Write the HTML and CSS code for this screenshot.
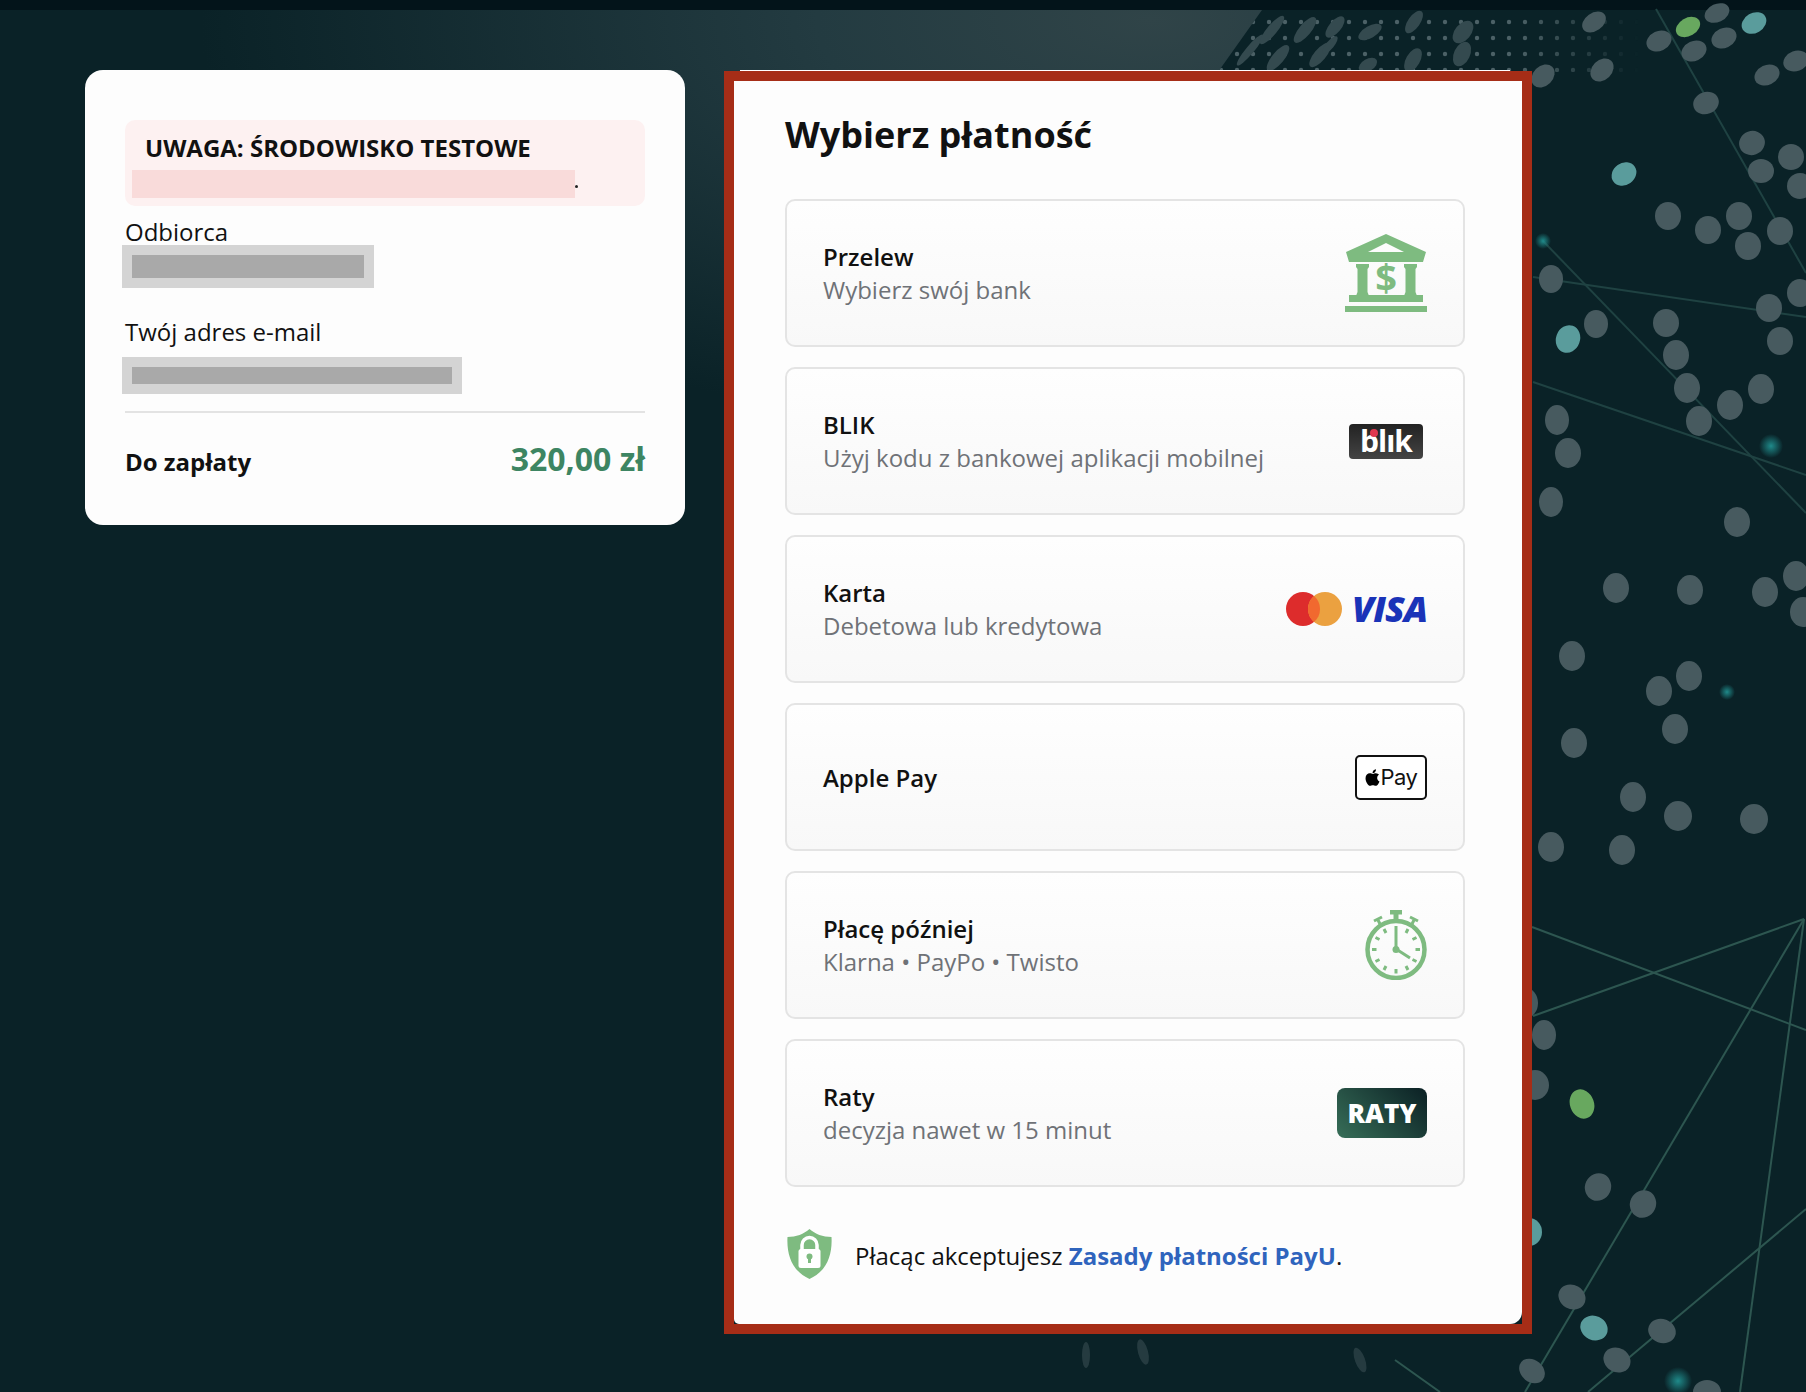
FILE: index.html

```html
<!DOCTYPE html>
<html lang="pl">
<head>
    <meta charset="UTF-8">
    <title>Wybierz płatność</title>
    <link rel="stylesheet" href="styles.css">
</head>
<body>
    <!-- Background picture -->
    <svg class="backdrop" width="1806" height="1392" viewBox="0 0 1806 1392">
        <defs>
            <radialGradient id="haze" gradientUnits="userSpaceOnUse" cx="0" cy="0" r="1" gradientTransform="translate(1150 20) scale(950 420)">
                <stop offset="0" stop-color="#304448"/>
                <stop offset="0.35" stop-color="#233b41"/>
                <stop offset="1" stop-color="#0a2227"/>
            </radialGradient>
            <pattern id="dots" width="16" height="16" patternUnits="userSpaceOnUse">
                <circle cx="5" cy="6" r="2.200" fill="#4c6166"/>
            </pattern>
            <linearGradient id="fade" gradientUnits="userSpaceOnUse" x1="1230" x2="1640" y1="0" y2="0">
                <stop offset="0" stop-color="#fff"/>
                <stop offset="0.7" stop-color="#fff"/>
                <stop offset="1" stop-color="#000"/>
            </linearGradient>
            <mask id="fade-mask"><rect x="1200" y="10" width="440" height="62" fill="url(#fade)"/></mask>
            <radialGradient id="glow">
                <stop offset="0" stop-color="#1f8a8a"/>
                <stop offset="1" stop-color="#1f8a8a" stop-opacity="0"/>
            </radialGradient>
        </defs>
        <rect width="1806" height="1392" fill="#0a2227"/>
        <rect width="1806" height="520" fill="url(#haze)"/>
        <polygon points="1262,10 1806,10 1806,520 1350,520 1350,90 1218,72" fill="#0a2227"/>
        <polygon points="1218,72 1262,10 1806,10 1806,72" fill="url(#dots)" mask="url(#fade-mask)"/>
        <g class="blobs">
            <ellipse cx="1250" cy="50" rx="4" ry="20" transform="rotate(40 1250 50)"/>
            <ellipse cx="1272" cy="30" rx="5" ry="18" transform="rotate(40 1272 30)"/>
            <ellipse cx="1278" cy="58" rx="6" ry="16" transform="rotate(40 1278 58)"/>
            <ellipse cx="1305" cy="30" rx="6" ry="16" transform="rotate(40 1305 30)"/>
            <ellipse cx="1320" cy="55" rx="6" ry="15" transform="rotate(40 1320 55)"/>
            <ellipse cx="1335" cy="27" rx="6" ry="13" transform="rotate(40 1335 27)"/>
            <ellipse cx="1330" cy="45" rx="4" ry="11" transform="rotate(40 1330 45)"/>
            <ellipse cx="1370" cy="32" rx="6" ry="13" transform="rotate(60 1370 32)"/>
            <ellipse cx="1368" cy="65" rx="6" ry="10" transform="rotate(60 1368 65)"/>
            <ellipse cx="1414" cy="22" rx="6" ry="13" transform="rotate(35 1414 22)"/>
            <ellipse cx="1413" cy="60" rx="7" ry="13" transform="rotate(30 1413 60)"/>
            <ellipse cx="1463" cy="32" rx="8" ry="13" transform="rotate(40 1463 32)"/>
            <ellipse cx="1462" cy="54" rx="8" ry="13" transform="rotate(25 1462 54)"/>
        </g>
        <rect width="1806" height="10" fill="#03141a"/>
        <g class="links links-dim">
            <line x1="1656" y1="9" x2="1806" y2="273"/>
            <line x1="1543" y1="241" x2="1806" y2="513"/>
            <line x1="1533" y1="277" x2="1806" y2="317"/>
            <line x1="1533" y1="382" x2="1806" y2="475"/>
        </g>
        <g class="links">
            <line x1="1533" y1="1016" x2="1804" y2="919"/>
            <line x1="1532" y1="927" x2="1806" y2="1030"/>
            <line x1="1525" y1="1392" x2="1804" y2="919"/>
            <line x1="1740" y1="1392" x2="1804" y2="919"/>
            <line x1="1806" y1="1209" x2="1588" y2="1392"/>
            <line x1="1395" y1="1360" x2="1440" y2="1392"/>
        </g>
        <circle cx="1543" cy="241" r="8" fill="url(#glow)"/>
        <circle cx="1771" cy="446" r="12" fill="url(#glow)"/>
        <circle cx="1727" cy="692" r="8" fill="url(#glow)"/>
        <circle cx="1678" cy="1381" r="14" fill="url(#glow)"/>
        <g class="round">
            <ellipse cx="1594" cy="22" rx="13" ry="9" transform="rotate(-35 1594 22)"/>
            <ellipse cx="1659" cy="41" rx="13" ry="10" transform="rotate(-25 1659 41)"/>
            <ellipse cx="1694" cy="51" rx="13" ry="10" transform="rotate(-25 1694 51)"/>
            <ellipse cx="1724" cy="38" rx="13" ry="10" transform="rotate(-25 1724 38)"/>
            <ellipse cx="1717" cy="13" rx="13" ry="9" transform="rotate(-25 1717 13)"/>
            <ellipse cx="1602" cy="70" rx="13" ry="10" transform="rotate(-45 1602 70)"/>
            <ellipse cx="1543" cy="76" rx="13" ry="10" transform="rotate(-45 1543 76)"/>
            <ellipse cx="1767" cy="75" rx="13" ry="10" transform="rotate(-25 1767 75)"/>
            <ellipse cx="1796" cy="61" rx="13" ry="10" transform="rotate(-20 1796 61)"/>
            <ellipse cx="1706" cy="103" rx="13" ry="11" transform="rotate(-20 1706 103)"/>
            <ellipse cx="1752" cy="143" rx="13" ry="12" transform="rotate(-20 1752 143)"/>
            <ellipse cx="1761" cy="171" rx="13" ry="12"/>
            <ellipse cx="1791" cy="157" rx="13" ry="13"/>
            <ellipse cx="1800" cy="186" rx="13" ry="13"/>
            <ellipse cx="1668" cy="216" rx="13" ry="14"/>
            <ellipse cx="1708" cy="230" rx="13" ry="14"/>
            <ellipse cx="1739" cy="216" rx="13" ry="14"/>
            <ellipse cx="1780" cy="231" rx="13" ry="14"/>
            <ellipse cx="1748" cy="246" rx="13" ry="14"/>
            <ellipse cx="1551" cy="279" rx="12" ry="14"/>
            <ellipse cx="1800" cy="293" rx="13" ry="14"/>
            <ellipse cx="1769" cy="308" rx="13" ry="14"/>
            <ellipse cx="1596" cy="324" rx="12" ry="14"/>
            <ellipse cx="1666" cy="323" rx="13" ry="14"/>
            <ellipse cx="1676" cy="355" rx="13" ry="15"/>
            <ellipse cx="1780" cy="341" rx="13" ry="14"/>
            <ellipse cx="1687" cy="388" rx="13" ry="15"/>
            <ellipse cx="1730" cy="405" rx="13" ry="15"/>
            <ellipse cx="1761" cy="389" rx="13" ry="15"/>
            <ellipse cx="1699" cy="421" rx="13" ry="15"/>
            <ellipse cx="1557" cy="420" rx="12" ry="15"/>
            <ellipse cx="1568" cy="453" rx="13" ry="15"/>
            <ellipse cx="1551" cy="502" rx="12" ry="15"/>
            <ellipse cx="1737" cy="522" rx="13" ry="15"/>
            <ellipse cx="1616" cy="588" rx="13" ry="15"/>
            <ellipse cx="1690" cy="590" rx="13" ry="15"/>
            <ellipse cx="1765" cy="592" rx="13" ry="15"/>
            <ellipse cx="1796" cy="576" rx="13" ry="15"/>
            <ellipse cx="1803" cy="612" rx="13" ry="15"/>
            <ellipse cx="1572" cy="656" rx="13" ry="15"/>
            <ellipse cx="1689" cy="676" rx="13" ry="15"/>
            <ellipse cx="1659" cy="691" rx="13" ry="15"/>
            <ellipse cx="1574" cy="743" rx="13" ry="15"/>
            <ellipse cx="1675" cy="729" rx="13" ry="15"/>
            <ellipse cx="1633" cy="797" rx="13" ry="15"/>
            <ellipse cx="1678" cy="816" rx="14" ry="15"/>
            <ellipse cx="1754" cy="819" rx="14" ry="15"/>
            <ellipse cx="1551" cy="847" rx="13" ry="15"/>
            <ellipse cx="1622" cy="850" rx="13" ry="15"/>
            <ellipse cx="1526" cy="1003" rx="12" ry="15"/>
            <ellipse cx="1544" cy="1035" rx="12" ry="15"/>
            <ellipse cx="1535" cy="1085" rx="14" ry="15"/>
            <ellipse cx="1598" cy="1187" rx="13" ry="14" transform="rotate(25 1598 1187)"/>
            <ellipse cx="1643" cy="1204" rx="13" ry="14" transform="rotate(25 1643 1204)"/>
            <ellipse cx="1572" cy="1297" rx="14" ry="12" transform="rotate(30 1572 1297)"/>
            <ellipse cx="1617" cy="1360" rx="14" ry="12" transform="rotate(30 1617 1360)"/>
            <ellipse cx="1662" cy="1331" rx="14" ry="12" transform="rotate(20 1662 1331)"/>
            <ellipse cx="1532" cy="1371" rx="14" ry="11" transform="rotate(40 1532 1371)"/>
            <ellipse cx="1707" cy="1392" rx="14" ry="12"/>
            <ellipse cx="1360" cy="1360" rx="5" ry="13" transform="rotate(-20 1360 1360)" opacity="0.45"/>
            <ellipse cx="1143" cy="1352" rx="5" ry="13" transform="rotate(-15 1143 1352)" opacity="0.45"/>
            <ellipse cx="1086" cy="1355" rx="4" ry="13" opacity="0.45"/>
        </g>
        <ellipse class="green" cx="1688" cy="27" rx="13" ry="9" transform="rotate(-30 1688 27)"/>
        <ellipse class="teal" cx="1754" cy="23" rx="13" ry="10" transform="rotate(-30 1754 23)"/>
        <ellipse class="teal" cx="1624" cy="174" rx="13" ry="11" transform="rotate(-35 1624 174)"/>
        <ellipse class="teal" cx="1568" cy="339" rx="12" ry="14" transform="rotate(20 1568 339)"/>
        <ellipse class="green" cx="1582" cy="1104" rx="12" ry="15" transform="rotate(-20 1582 1104)"/>
        <ellipse class="teal" cx="1594" cy="1328" rx="14" ry="12" transform="rotate(25 1594 1328)"/>
        <ellipse class="teal" cx="1529" cy="1232" rx="13" ry="14"/>
    </svg>

    <div class="layout">
        <!-- Order summary -->
        <div class="summary">
            <div class="notice">
                <h2>UWAGA: ŚRODOWISKO TESTOWE</h2>
                <div class="notice-line"><span class="notice-mask"></span><span class="notice-dot"></span></div>
            </div>
            <div class="field-label recipient">Odbiorca</div>
            <div class="mask mask-recipient"><span></span></div>
            <div class="field-label email">Twój adres e-mail</div>
            <div class="mask mask-email"><span></span></div>
            <div class="total">
                <span class="total-label">Do zapłaty</span>
                <span class="total-value">320,00 zł</span>
            </div>
        </div>

        <!-- Payment methods -->
        <div class="frame">
            <div class="panel">
                <h1>Wybierz płatność</h1>

                <div class="methods">
                    <div class="method">
                        <div class="method-text">
                            <div class="method-name">Przelew</div>
                            <div class="method-desc">Wybierz swój bank</div>
                        </div>
                        <svg width="82" height="78" viewBox="0 0 82 78" fill="#7ebb80">
                            <path fill-rule="evenodd" d="M41 0L81 18L78 28H4L1 18ZM41 9L23 18H59Z"/>
                            <path d="M11 30H24V33L22.500 35V58L24 62H11L12.500 58V35L11 33ZM59 30H72V33L70.500 35V58L72 62H59L60.500 58V35L59 33Z"/>
                            <rect x="4" y="61" width="74" height="7"/>
                            <rect y="72" width="82" height="6"/>
                            <text class="bank-dollar" x="41" y="58" text-anchor="middle">$</text>
                        </svg>
                    </div>

                    <div class="method">
                        <div class="method-text">
                            <div class="method-name">BLIK</div>
                            <div class="method-desc">Użyj kodu z bankowej aplikacji mobilnej</div>
                        </div>
                        <div class="blik">blık<span class="blik-dot"></span></div>
                    </div>

                    <div class="method">
                        <div class="method-text">
                            <div class="method-name">Karta</div>
                            <div class="method-desc">Debetowa lub kredytowa</div>
                        </div>
                        <div class="cards">
                            <svg width="56" height="34" viewBox="0 0 56 34">
                                <circle cx="17" cy="17" r="17" fill="#dd2c2c"/>
                                <circle cx="39" cy="17" r="17" fill="#eba140"/>
                                <path d="M28 4a17 17 0 0 1 0 26a17 17 0 0 1 0-26z" fill="#f1692f"/>
                            </svg>
                            <span class="visa">VISA</span>
                        </div>
                    </div>

                    <div class="method">
                        <div class="method-text">
                            <div class="method-name">Apple Pay</div>
                        </div>
                        <div class="apple-pay">
                            <svg width="15" height="19" viewBox="0 0 384 512" fill="#000">
                                <path d="M318.7 268.7c-.2-36.7 16.4-64.4 50-84.8-18.8-26.9-47.2-41.7-84.7-44.6-35.5-2.8-74.3 20.7-88.5 20.7-15 0-49.4-19.7-76.4-19.7C63.3 141.2 4 184.8 4 273.5q0 39.3 14.4 81.2c12.8 36.7 59 126.7 107.2 125.2 25.2-.6 43-17.9 75.8-17.9 31.8 0 48.3 17.9 76.4 17.9 48.600-.7 90.400-82.500 102.600-119.300-65.200-30.700-61.700-90-61.700-91.900zm-56.600-164.200c27.300-32.400 24.800-61.900 24-72.500-24.100 1.400-52 16.400-67.900 34.900-17.500 19.800-27.800 44.300-25.600 71.900 26.100 2 49.900-11.400 69.500-34.300z"/>
                            </svg>
                            <span>Pay</span>
                        </div>
                    </div>

                    <div class="method">
                        <div class="method-text">
                            <div class="method-name">Płacę później</div>
                            <div class="method-desc">Klarna • PayPo • Twisto</div>
                        </div>
                        <svg width="62" height="70" viewBox="0 0 62 70" fill="none" stroke="#7ebb80">
                            <circle cx="31" cy="39.500" r="28.500" stroke-width="4.500"/>
                            <path d="M25 2H37M31 2V10" stroke-width="5"/>
                            <path d="M12 8L15 14M50 8L47 14M9 11L17 7M53 11L45 7" stroke-width="3"/>
                            <path d="M31 39V16M31 39L45 48" stroke-width="3"/>
                            <circle cx="31" cy="39.500" r="3.500" fill="#7ebb80" stroke="none"/>
                            <path stroke-width="3" d="M43 19L41 23M51.500 27.500L47.500 29.500M55 39.500H50.500M51.500 51.500L47.500 49.500M43 60L41 56M31 63.500V59M19 60L21 56M10.500 51.500L14.500 49.500M7 39.500H11.500M10.500 27.500L14.500 29.500M19 19L21 23"/>
                        </svg>
                    </div>

                    <div class="method">
                        <div class="method-text">
                            <div class="method-name">Raty</div>
                            <div class="method-desc">decyzja nawet w 15 minut</div>
                        </div>
                        <div class="raty">RATY</div>
                    </div>
                </div>

                <div class="terms">
                    <svg width="45" height="50" viewBox="0 0 45 50">
                        <path d="M22.500 0C28 5 36 8 44.500 8C45.500 26 40 42 22.500 50C5 42-.5 26 .5 8C9 8 17 5 22.500 0Z" fill="#7ebb80"/>
                        <path d="M15 21V16a7.500 7.500 0 0 1 15 0V21" fill="none" stroke="#fff" stroke-width="3.500"/>
                        <rect x="11.500" y="20" width="22" height="19" rx="2.500" fill="#fff"/>
                        <circle cx="22.500" cy="27.500" r="3" fill="#7ebb80"/>
                        <rect x="21" y="28" width="3" height="6" fill="#7ebb80"/>
                    </svg>
                    <p>Płacąc akceptujesz <a href="#">Zasady płatności PayU</a>.</p>
                </div>
            </div>
        </div>
    </div>
</body>
</html>
```

FILE: styles.css

```css
/* General Styles */
body {
    margin: 0;
    padding: 0;
    font-family: 'Open Sans', 'Noto Sans', sans-serif;
    background-color: #0a2227;
    color: #111;
    width: 1806px;
    height: 1392px;
    overflow: hidden;
    position: relative;
}

.backdrop {
    position: absolute;
    top: 0;
    left: 0;
}

.blobs ellipse {
    fill: #344a4f;
}

.links line {
    stroke: #2d5650;
    stroke-width: 2;
}

.links-dim line {
    stroke: #1f4242;
}

.round ellipse {
    fill: #475a5f;
}

.green {
    fill: #68a85f;
}

.teal {
    fill: #5a9c9c;
}

.layout {
    position: relative;
    display: flex;
    align-items: flex-start;
    gap: 39px;
    padding: 70px 0 0 85px;
}

/* Summary card */
.summary {
    box-sizing: border-box;
    width: 600px;
    height: 455px;
    padding: 50px 40px 0;
    background-color: #fdfdfd;
    border-radius: 18px;
}

.notice {
    box-sizing: border-box;
    height: 86px;
    padding: 12px 7px 0;
    background-color: #fdf1f1;
    border-radius: 10px;
}

.notice h2 {
    margin: 0 0 0 13px;
    font-size: 24px;
    line-height: 32px;
    font-weight: 700;
}

.notice-line {
    display: flex;
    align-items: flex-end;
    margin-top: 6px;
}

.notice-mask {
    width: 443px;
    height: 28px;
    background-color: #f9dbda;
}

.notice-dot {
    width: 3px;
    height: 3px;
    margin-bottom: 10px;
    border-radius: 50%;
    background-color: #222;
}

.field-label {
    font-size: 24px;
    line-height: 32px;
}

.recipient {
    margin-top: 10px;
    height: 29px;
}

.email {
    margin-top: 28px;
}

.mask {
    box-sizing: border-box;
    margin-left: -3px;
    background-color: #d4d4d4;
    padding: 10px;
}

.mask span {
    display: block;
    height: 100%;
    background-color: #a9a9a9;
}

.mask-recipient {
    width: 252px;
    height: 43px;
}

.mask-email {
    width: 340px;
    height: 37px;
    margin-top: 9px;
}

.total {
    display: flex;
    justify-content: space-between;
    align-items: baseline;
    margin-top: 17px;
    padding-top: 24px;
    border-top: 2px solid #e3e3e3;
}

.total-label {
    font-size: 24px;
    font-weight: 700;
}

.total-value {
    font-size: 32px;
    font-weight: 700;
    color: #3d8562;
}

/* Payment panel */
.frame {
    position: relative;
    margin-top: 1px;
    width: 808px;
    height: 1263px;
    box-sizing: border-box;
    border: 10px solid #a62d17;
    background-color: #0a2227;
}

.frame::before {
    content: "";
    position: absolute;
    top: -11px;
    left: 6px;
    right: 12px;
    height: 1px;
    background-color: #fff;
}

.panel {
    box-sizing: border-box;
    height: 100%;
    padding: 29px 57px 0 51px;
    background-color: #fdfdfd;
    border-radius: 0 0 12px 5px;
}

.panel h1 {
    margin: 0;
    font-size: 36px;
    line-height: 50px;
    font-weight: 700;
}

.methods {
    display: flex;
    flex-direction: column;
    gap: 20px;
    margin-top: 39px;
}

.method {
    box-sizing: border-box;
    height: 148px;
    padding: 0 36px;
    display: flex;
    align-items: center;
    justify-content: space-between;
    border: 2px solid #e4e4e4;
    border-radius: 10px;
    background: linear-gradient(180deg, #fefefe, #f8f8f8);
}

.method-name {
    font-size: 24px;
    line-height: 33px;
    font-weight: 600;
}

.method-desc {
    font-size: 24px;
    line-height: 33px;
    color: #6f7277;
}

.bank-dollar {
    font-size: 38px;
    font-weight: 700;
}

/* Logos */
.blik {
    position: relative;
    box-sizing: border-box;
    width: 74px;
    height: 35px;
    margin-right: 4px;
    border-radius: 4px;
    background: linear-gradient(180deg, #222, #444);
    color: #fff;
    font-size: 30px;
    line-height: 33px;
    font-weight: 700;
    text-align: center;
    letter-spacing: -1px;
}

.blik-dot {
    position: absolute;
    top: 5px;
    left: 21px;
    width: 8px;
    height: 8px;
    border-radius: 50%;
    background-color: #e0384f;
}

.cards {
    display: flex;
    align-items: center;
    gap: 10px;
}

.visa {
    font-size: 36px;
    line-height: 34px;
    font-weight: 800;
    font-style: italic;
    color: #1a33b8;
    letter-spacing: -1px;
}

.apple-pay {
    box-sizing: border-box;
    width: 72px;
    height: 45px;
    display: flex;
    align-items: center;
    justify-content: center;
    gap: 1px;
    border: 2px solid #111;
    border-radius: 5px;
    background-color: #fff;
    font-family: 'Inter', sans-serif;
    font-size: 22px;
    letter-spacing: -0.5px;
}

.raty {
    width: 90px;
    height: 50px;
    border-radius: 8px;
    background: linear-gradient(45deg, #376e58, #0b2024);
    color: #fff;
    font-size: 26px;
    line-height: 50px;
    font-weight: 800;
    text-align: center;
}

/* Terms */
.terms {
    display: flex;
    align-items: center;
    gap: 23px;
    margin: 42px 0 0 2px;
}

.terms p {
    margin: 0;
    padding-top: 3px;
    font-size: 24px;
}

.terms a {
    color: #2f64bd;
    font-weight: 700;
    text-decoration: none;
}
```
